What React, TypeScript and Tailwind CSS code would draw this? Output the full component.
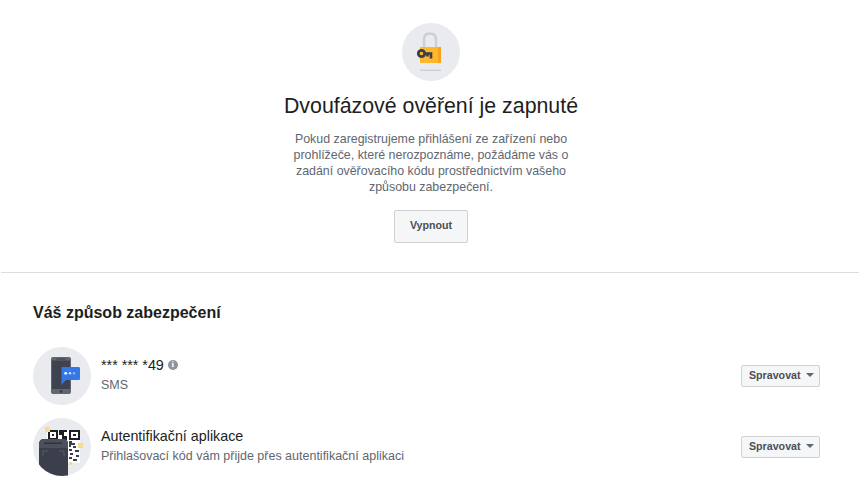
import React from "react";

function LockIcon() {
  return (
    <svg width="58" height="58" viewBox="0 0 58 58" fill="none">
      <circle cx="29" cy="29" r="29" fill="#e9ebee" />
      <path d="M22 25V16.5C22 12.5 24.5 10.5 28 10.5C31.5 10.5 34 12.5 34 16.5V24" stroke="#ccd0d5" strokeWidth="2.5" />
      <rect x="18" y="24" width="21" height="16" fill="#fcb72b" />
      <rect x="36" y="24" width="3" height="16" fill="#f7a21b" />
      <circle cx="19.5" cy="30.5" r="3.2" stroke="#3a3f4b" strokeWidth="2.8" />
      <path d="M22 30.5H29V35.5M25.5 30.5V33.5" stroke="#3a3f4b" strokeWidth="2.6" />
      <rect x="18" y="46.5" width="21" height="1.5" fill="#ccd0d5" />
    </svg>
  );
}

function PhoneIcon() {
  return (
    <svg width="58" height="58" viewBox="0 0 58 58" fill="none">
      <circle cx="29" cy="29" r="29" fill="#e9ebee" />
      <rect x="18" y="10" width="20" height="37" rx="2" fill="#606770" />
      <rect x="19" y="13.5" width="18" height="28.5" fill="#3e434f" />
      <rect x="23.5" y="11.5" width="9" height="1" fill="#3a3f4b" />
      <circle cx="28" cy="44.5" r="1.4" fill="#3a3f4b" />
      <path d="M29.5 20H45.5C46.5 20 47 20.5 47 21.5V31.5C47 32.5 46.5 33 45.5 33H33L28.5 38V21C28.5 20.5 29 20 29.5 20Z" fill="#3578e5" />
      <circle cx="32.7" cy="26.3" r="1.4" fill="#ffffff" />
      <circle cx="37" cy="26.3" r="1.3" fill="#c6d9f7" />
      <circle cx="41" cy="26.3" r="1.2" fill="#8db4ee" />
    </svg>
  );
}

function QrIcon() {
  return (
    <svg width="58" height="58" viewBox="0 0 58 58" fill="none">
      <defs>
        <clipPath id="qr-clip">
          <circle cx="29" cy="29" r="29" />
        </clipPath>
      </defs>
      <circle cx="29" cy="29" r="29" fill="#e9ebee" />
      <g clipPath="url(#qr-clip)">
        <rect x="14" y="12" width="33" height="10" fill="#ffffff" />
        <rect x="35" y="22" width="12" height="23" fill="#ffffff" />
        <path d="M15 12H25V22H15ZM17 14V20H23V14ZM36 12H47V22H36ZM38 14V20H45V14ZM40 16H43V18H40ZM19 16H21V18H19ZM26 12H34V14H31V18H34V22H29V17H26Z" fill="#1c1e21" fillRule="evenodd" />
        <path d="M36 23H39V25H42V27H38V29H36ZM40 28H43V30H40ZM36 31H39V33H36ZM42 32H46V34H42ZM37 35H40V37H37ZM43 37H46V39H43ZM36 39H39V41H36ZM40 41H44V43H40Z" fill="#3a3f4b" />
        <rect x="12" y="9" width="5" height="5" fill="#f6dc8c" />
        <rect x="45" y="25" width="5" height="5" fill="#f6dc8c" />
        <rect x="36" y="44" width="3" height="3" fill="#f6dc8c" />
        <path d="M6 58V26C6 23 8 21 11 21H30C33 21 35 23 35 26V58Z" fill="#3a3f4b" />
        <path d="M6 30V26C6 23 8 21 11 21H30C33 21 35 23 35 26V30Z" fill="#4b505c" />
        <rect x="11" y="24.5" width="18" height="1.5" fill="#2f333d" />
        <path d="M10 38V33H15M31 38V33H26" stroke="#606770" strokeWidth="0.8" />
      </g>
    </svg>
  );
}

function ManageButton() {
  return (
    <button className="flex h-[22px] w-[79px] items-center gap-[5px] rounded-[2px] border border-[#ced0d4] bg-[#f5f6f7] pb-[2px] pl-[7px] text-[10.67px] leading-none font-bold text-[#4b4f56]">
      Spravovat
      <span className="h-0 w-0 border-x-[4.5px] border-t-[4px] border-x-transparent border-t-[#606770]" />
    </button>
  );
}

export default function App() {
  return (
    <div className="h-[500px] w-[860px] overflow-hidden bg-white font-['Liberation_Sans',Arial,sans-serif] text-[#1c1e21]">
      <div className="flex h-[272px] flex-col items-center pt-[23px] pl-[2px]">
        <LockIcon />
        <h1 className="mt-[11px] text-[21.33px] leading-[28px] font-normal">Dvoufázové ověření je zapnuté</h1>
        <p className="mt-[11px] w-[300px] text-center text-[12.4px] leading-[16px] text-[#606770]">
          Pokud zaregistrujeme přihlášení ze zařízení nebo prohlížeče, které nerozpoznáme, požádáme vás o zadání ověřovacího kódu prostřednictvím vašeho způsobu zabezpečení.
        </p>
        <button className="mt-[15px] h-[33px] w-[74px] rounded-[2px] border border-[#ced0d4] bg-[#f5f6f7] pb-[3px] text-[10.67px] font-bold text-[#4b4f56]">
          Vypnout
        </button>
      </div>
      <div className="mx-[1px] h-px bg-[#dadde1]" />
      <div className="px-[33px] pt-[31px]">
        <h2 className="text-[16px] leading-[18px] font-bold">Váš způsob zabezpečení</h2>
        <div className="mt-[25px] flex flex-col gap-[13px] pr-[7px]">
          <div className="flex items-center">
            <PhoneIcon />
            <div className="mb-[4px] ml-[10px] flex-1">
              <div className="flex items-center gap-[4px] text-[14.3px] leading-[18px]">
                <span>*** *** *49</span>
                <span className="flex h-[10px] w-[10px] items-center justify-center rounded-full bg-[#8d949e] font-['Liberation_Serif',serif] text-[9px] leading-none font-bold text-white">i</span>
              </div>
              <div className="mt-[3px] text-[12.5px] leading-[16px] text-[#606770]">SMS</div>
            </div>
            <ManageButton />
          </div>
          <div className="flex items-center">
            <QrIcon />
            <div className="mb-[4px] ml-[10px] flex-1">
              <div className="text-[14.3px] leading-[18px]">Autentifikační aplikace</div>
              <div className="mt-[3px] text-[12.5px] leading-[16px] text-[#606770]">Přihlašovací kód vám přijde přes autentifikační aplikaci</div>
            </div>
            <ManageButton />
          </div>
        </div>
      </div>
    </div>
  );
}
